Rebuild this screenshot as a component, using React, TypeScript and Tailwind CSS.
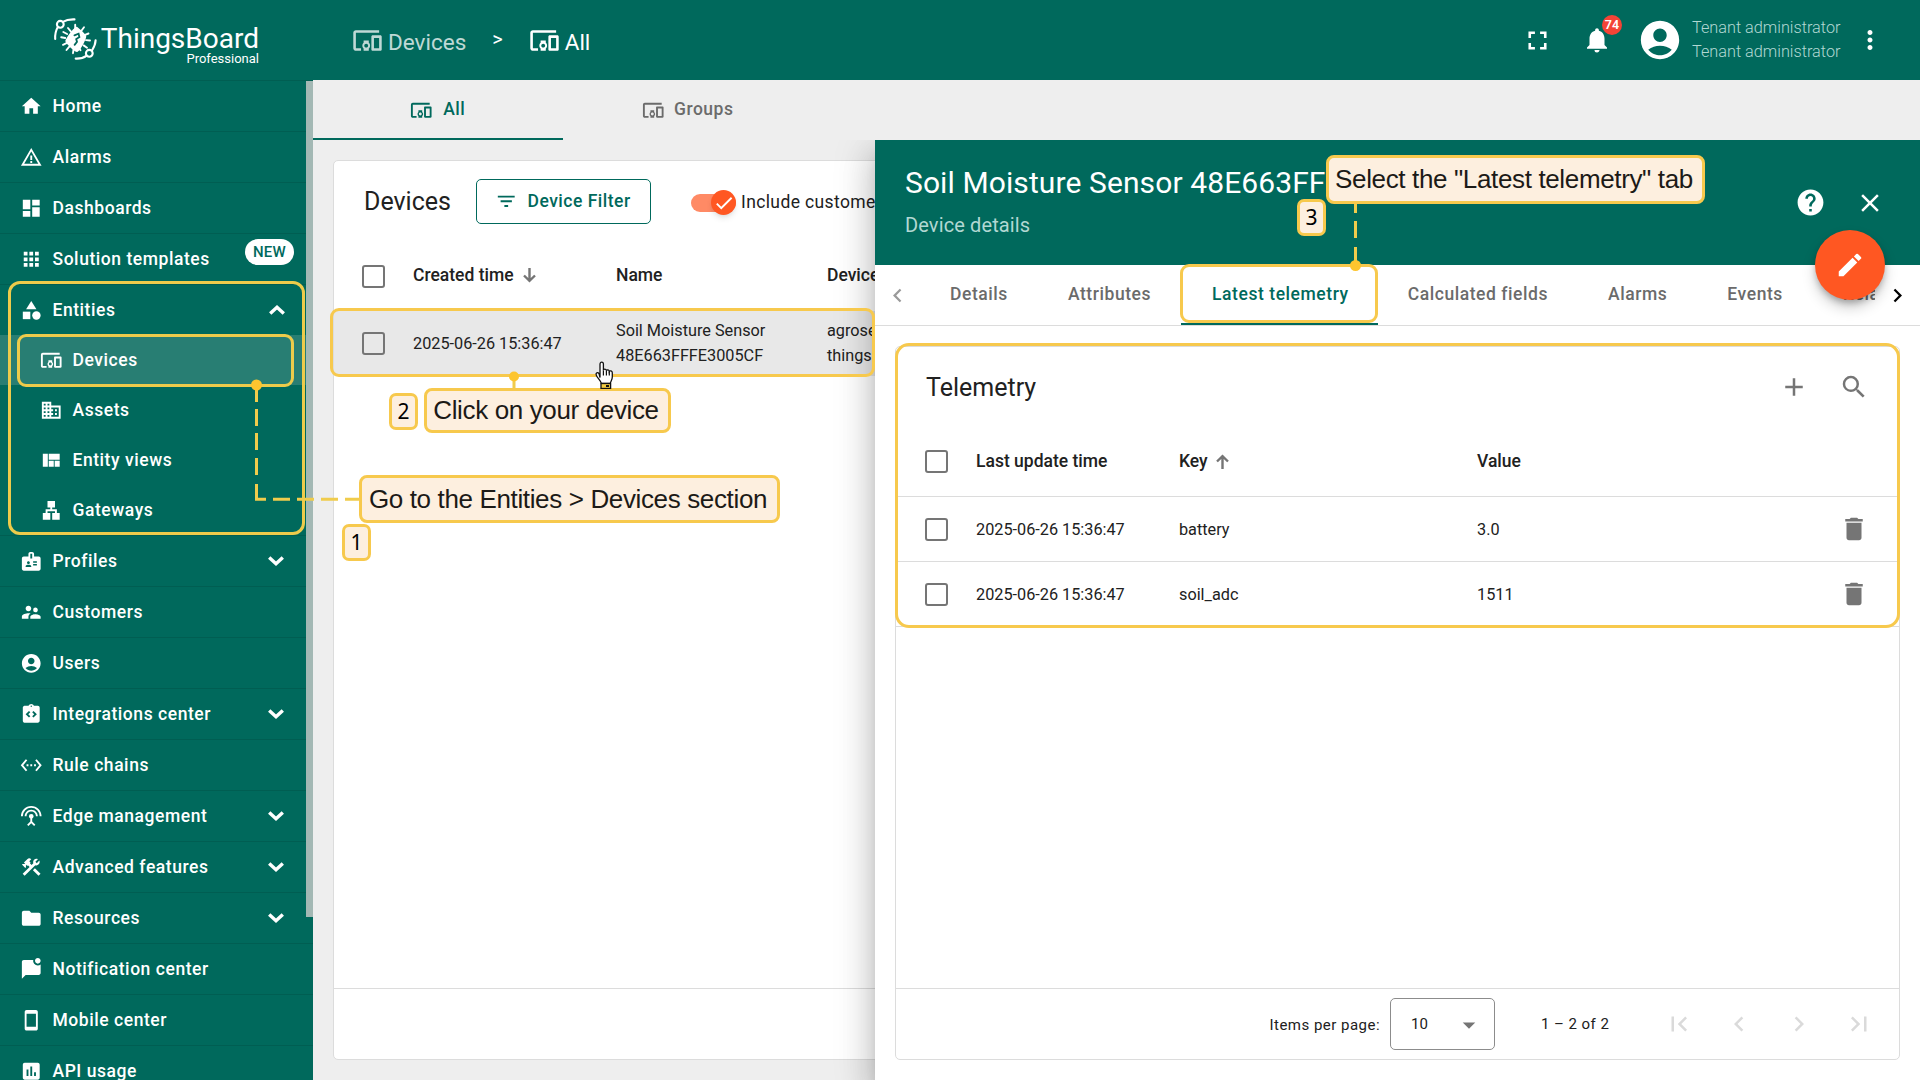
import type { ReactNode } from 'react';
import type { IconType } from 'react-icons';
import {
  MdAccountCircle,
  MdAdd,
  MdApps,
  MdArrowDropDown,
  MdBadge,
  MdCategory,
  MdCheck,
  MdChevronLeft,
  MdChevronRight,
  MdClose,
  MdConstruction,
  MdDashboard,
  MdDelete,
  MdDevicesOther,
  MdDomain,
  MdEdit,
  MdFilterList,
  MdFirstPage,
  MdFolder,
  MdFullscreen,
  MdHelp,
  MdHome,
  MdInsertChart,
  MdIntegrationInstructions,
  MdLan,
  MdLastPage,
  MdMarkChatUnread,
  MdMoreVert,
  MdNotifications,
  MdSearch,
  MdSettingsEthernet,
  MdSettingsInputAntenna,
  MdStayCurrentPortrait,
  MdSupervisorAccount,
  MdViewQuilt,
  MdWarningAmber,
} from 'react-icons/md';

type MenuItem = {
  label: string;
  icon: IconType;
  badge?: string;
  toggle?: 'open' | 'closed';
  children?: { label: string; icon: IconType; active?: boolean }[];
};

const menu: MenuItem[] = [
  { label: 'Home', icon: MdHome },
  { label: 'Alarms', icon: MdWarningAmber },
  { label: 'Dashboards', icon: MdDashboard },
  { label: 'Solution templates', icon: MdApps, badge: 'NEW' },
  {
    label: 'Entities',
    icon: MdCategory,
    toggle: 'open',
    children: [
      { label: 'Devices', icon: MdDevicesOther, active: true },
      { label: 'Assets', icon: MdDomain },
      { label: 'Entity views', icon: MdViewQuilt },
      { label: 'Gateways', icon: MdLan },
    ],
  },
  { label: 'Profiles', icon: MdBadge, toggle: 'closed' },
  { label: 'Customers', icon: MdSupervisorAccount },
  { label: 'Users', icon: MdAccountCircle },
  { label: 'Integrations center', icon: MdIntegrationInstructions, toggle: 'closed' },
  { label: 'Rule chains', icon: MdSettingsEthernet },
  { label: 'Edge management', icon: MdSettingsInputAntenna, toggle: 'closed' },
  { label: 'Advanced features', icon: MdConstruction, toggle: 'closed' },
  { label: 'Resources', icon: MdFolder, toggle: 'closed' },
  { label: 'Notification center', icon: MdMarkChatUnread },
  { label: 'Mobile center', icon: MdStayCurrentPortrait },
  { label: 'API usage', icon: MdInsertChart },
];

const telemetry = [
  { time: '2025-06-26 15:36:47', key: 'battery', value: '3.0' },
  { time: '2025-06-26 15:36:47', key: 'soil_adc', value: '1511' },
];

function Logo() {
  return (
    <svg width="46" height="46" viewBox="0 0 46 46" fill="none" stroke="#fff" strokeWidth="2.100" strokeLinecap="round">
      {/* orbit arcs */}
      <circle cx="9.3" cy="9.3" r="3.4" />
      <path d="M11.8 6.8C14.5 5.2 18.5 4.2 23.5 4.4" />
      <path d="M6.8 12C4.8 15.5 3.9 19.5 4.2 24" />
      <circle cx="38.3" cy="38.3" r="3.4" />
      <path d="M41 35.5C43.2 32 44.5 29 44.6 25.3" />
      <path d="M35.8 40.6C32.5 43 29 43.8 24.7 43.6" />
      {/* chip pins */}
      <path
        d="M17 13l3 3.6M24.2 9.8v4M33 12.2l-3 4M37.5 18.5l-4 1.6M39 25.5l-4-.4M36 32.8l-3.4-2.4M29.5 35.2l-2-3.2M22 38.2l.6-4M15.5 35l2.8-3.4M12 29.8l4-2M10.2 22.2l4 .8M12.3 17l3.8 2"
        strokeWidth="1.900"
      />
      <path d="M25.600 11.800c1 0 9 7.200 9.600 9.200.6 2-5.400 14.600-9 16-1.800.5-11.800-8.600-11.800-10.800 0-2.400 8.800-14.400 11.200-14.400z" fill="#fff" stroke="none" />
      <path d="M23.400 20.300l4.200-1.600.8 3.400-3.200 2 .8 2.800-2.400 3" stroke="#00695c" strokeWidth="1.800" />
    </svg>
  );
}

function Chevron({ open }: { open: boolean }) {
  return (
    <svg width="16" height="10" viewBox="0 0 16 10" fill="none" stroke="#fff" strokeWidth="3.4">
      {open ? <path d="M1.200 8.600L8 2.300l6.800 6.300" /> : <path d="M1.200 1.400L8 7.700l6.800-6.300" />}
    </svg>
  );
}

function SortArrow({ up }: { up?: boolean }) {
  return (
    <svg width="13" height="15" viewBox="0 0 13 15" fill="none" stroke="#757575" strokeWidth="2.400">
      {up ? <path d="M6.500 15V2M1 7.500l5.500-5.300L12 7.500" /> : <path d="M6.500 0v13M1 7.500l5.500 5.300L12 7.500" />}
    </svg>
  );
}

function Checkbox() {
  return <span className="block size-[23px] shrink-0 rounded-[3px] border-[2.500px] border-[#757575]" />;
}

function Sidebar() {
  return (
    <nav className="relative w-[313px] shrink-0 overflow-hidden bg-[#00695c] text-[17.500px] font-medium tracking-[0.55px] text-white">
      {menu.map(({ label, icon: Icon, badge, toggle, children }) => (
        <div key={label}>
          <div className="flex h-[51px] items-center border-t border-[#005e52] pl-5">
            <Icon className="size-[22.500px]" />
            <span className="ml-[10px]">{label}</span>
            {badge && (
              <span className="relative -top-[7px] ml-auto mr-[19px] flex h-[26px] w-[49px] items-center justify-center rounded-full bg-white text-[15px] tracking-[0.2px] text-[#00695c]">
                {badge}
              </span>
            )}
            {toggle && (
              <span className={toggle === 'open' ? 'ml-auto mr-7' : 'ml-auto mr-[29px]'}>
                <Chevron open={toggle === 'open'} />
              </span>
            )}
          </div>
          {children?.map(({ label: childLabel, icon: ChildIcon, active }) => (
            <div key={childLabel} className={active ? 'flex h-[50px] items-center bg-[#287e73] pl-10' : 'flex h-[50px] items-center pl-10'}>
              <ChildIcon className="size-[22.500px]" />
              <span className="ml-[10px]">{childLabel}</span>
            </div>
          ))}
        </div>
      ))}
      {/* scrollbar thumb */}
      <div className="absolute right-0 top-px h-[836px] w-[7px] bg-[#a3b8b4]" />
    </nav>
  );
}

function TopBar() {
  return (
    <header className="flex h-20 shrink-0 bg-[#00695c] text-white">
      <div className="flex w-[313px] pl-[51px] pt-[15px]">
        <Logo />
        <div className="ml-[4px] mt-[10px] flex w-[158px] flex-col items-end">
          <span className="text-[28px] leading-[28px]">ThingsBoard</span>
          <span className="text-[13px] leading-[12px]">Professional</span>
        </div>
      </div>
      <div className="flex items-center pl-[39px] text-[22.500px]">
        <span className="flex items-center text-white/75">
          <MdDevicesOther className="size-[31px]" />
          <span className="ml-[5px] mt-[5px]">Devices</span>
        </span>
        <span className="mx-[26px] -mt-[2px] text-[20px]">&gt;</span>
        <span className="flex items-center">
          <MdDevicesOther className="size-[31px]" />
          <span className="ml-[5px] mt-[5px]">All</span>
        </span>
      </div>
      <div className="ml-auto flex items-center pr-[35px]">
        <MdFullscreen className="size-[31px]" />
        <span className="relative ml-[29px]">
          <MdNotifications className="size-[30px]" />
          <span className="absolute -top-[10px] left-5 flex size-5 items-center justify-center rounded-full bg-[#f44336] text-[12.500px] font-semibold">
            74
          </span>
        </span>
        <MdAccountCircle className="ml-[25px] size-[46px]" />
        <div className="ml-[9px] w-[148px] whitespace-nowrap text-[16.250px] font-light leading-6 text-[#b2d8d3]">
          <p>Tenant administrator</p>
          <p>Tenant administrator</p>
        </div>
        <MdMoreVert className="ml-[15px] size-[30px]" />
      </div>
    </header>
  );
}

function DevicesPage() {
  return (
    <div className="flex h-full flex-col">
      <div className="flex h-[60px] shrink-0 text-[17.500px] font-medium tracking-[0.5px]">
        <div className="flex w-[250px] items-center justify-center border-b-2 border-[#00695c] text-[#00695c]">
          <MdDevicesOther className="-ml-px mt-[2px] size-[22.500px]" />
          <span className="ml-[11px]">All</span>
        </div>
        <div className="flex w-[250px] items-center justify-center border-b-2 border-transparent text-[#6b6b6b]">
          <MdDevicesOther className="-ml-px mt-[2px] size-[22.500px]" />
          <span className="ml-[10px]">Groups</span>
        </div>
      </div>
      <section className="mb-5 ml-5 mr-5 mt-5 flex grow flex-col rounded-[5px] border border-[#dcdcdc] bg-white text-[#212121]">
        <div className="flex h-20 shrink-0 items-center pl-[30px]">
          <h2 className="mt-[2px] w-[87px] text-[25px]">Devices</h2>
          <button className="ml-[25px] flex h-[45px] w-[175px] items-center rounded-[5px] border border-[#00695c] pl-[18px] text-[17.500px] font-medium tracking-[0.5px] text-[#00695c]">
            <MdFilterList className="size-[22.500px]" />
            <span className="ml-[10px]">Device Filter</span>
          </button>
          <span className="ml-10 mt-[3px] flex h-[18px] w-[45px] items-center justify-end rounded-full bg-[#ff8a65]">
            <span className="flex size-[25px] shrink-0 items-center justify-center rounded-full bg-[#ff5722] text-white shadow-md">
              <MdCheck className="size-[22px]" />
            </span>
          </span>
          <span className="ml-[5px] mt-[2px] whitespace-nowrap text-[17.500px] tracking-[0.38px]">Include customer entities</span>
        </div>
        <div className="flex h-[70px] shrink-0 items-center pl-[28px] text-[17.500px] font-medium">
          <Checkbox />
          <span className="-mt-[2px] ml-[28px] flex w-[203px] items-center gap-[9px]">
            Created time <SortArrow />
          </span>
          <span className="-mt-[2px] w-[211px]">Name</span>
          <span className="-mt-[2px] whitespace-nowrap">Device profile</span>
        </div>
        <div className="flex h-[65px] shrink-0 items-center bg-[#e8e8e8] pl-[28px] text-[16.250px] leading-[25px]">
          <Checkbox />
          <span className="ml-[28px] w-[203px]">2025-06-26 15:36:47</span>
          <span className="-mt-[2px] w-[170px]">Soil Moisture Sensor 48E663FFFE3005CF</span>
          <span className="-mt-[2px] ml-[41px] w-[100px]">agrosense thingsboard</span>
        </div>
        <div className="mt-auto h-[71px] shrink-0 border-t border-[#dcdcdc]" />
      </section>
    </div>
  );
}

function Paginator() {
  return (
    <div className="mt-auto flex h-[71px] shrink-0 items-center border-t border-[#dcdcdc] pr-[10px] text-[15px]">
      <span className="ml-auto mt-[2px] tracking-[0.48px]">Items per page:</span>
      <span className="ml-[10px] flex h-[52px] w-[105px] items-center rounded-[5px] border border-[#8c8c8c] pl-5 pt-px">
        10
        <MdArrowDropDown className="ml-auto mr-[10px] size-[30px] text-[#757575]" />
      </span>
      <span className="ml-[46px] w-[108px] tracking-[0.45px]">1 – 2 of 2</span>
      {[MdFirstPage, MdChevronLeft, MdChevronRight, MdLastPage].map((Icon, i) => (
        <span key={i} className="flex w-[60px] justify-center text-[#dadada]">
          <Icon className="size-[30px]" />
        </span>
      ))}
    </div>
  );
}

function DetailsPanel() {
  return (
    <aside className="absolute inset-y-0 right-0 flex w-[1045px] flex-col bg-white text-[#212121] shadow-[0_10px_13px_-6px_rgba(0,0,0,0.200),0_20px_30px_3px_rgba(0,0,0,0.140),0_8px_38px_6px_rgba(0,0,0,0.120)]">
      <header className="flex h-[125px] shrink-0 items-center bg-[#00695c] pl-[30px] pr-[35px] text-white">
        <div className="-mt-[3px] grow">
          <h1 className="text-[30px] leading-[40px] tracking-[0.1px]">Soil Moisture Sensor 48E663FF</h1>
          <p className="mt-[7px] text-[20px] leading-[30px] tracking-[0.12px] text-[#b2d8d3]">Device details</p>
        </div>
        <MdHelp className="size-[31px]" />
        <MdClose className="ml-[29px] mt-px size-[30px]" />
      </header>
      <div className="flex h-[61px] shrink-0 border-b border-[#dcdcdc] text-[17.500px] font-medium tracking-[0.56px] text-[#6b6b6b]">
        <span className="flex w-[45px] items-center justify-center">
          <MdChevronLeft className="size-[27px] text-[#9a9a9a]" />
        </span>
        <div className="flex w-[955px] overflow-hidden whitespace-nowrap leading-[59px]">
          <span className="px-[30px]">Details</span>
          <span className="px-[30px]">Attributes</span>
          <span className="h-[60px] border-b-2 border-[#00695c] pl-[31px] pr-[29px] text-[#00695c]">Latest telemetry</span>
          <span className="px-[30px]">Calculated fields</span>
          <span className="px-[30px]">Alarms</span>
          <span className="px-[30px]">Events</span>
          <span className="px-[30px]">Relations</span>
        </div>
        <span className="flex w-[45px] items-center justify-center">
          <MdChevronRight className="size-[27px] text-black" />
        </span>
      </div>
      <section className="m-5 flex grow flex-col rounded-[5px] border border-[#dcdcdc]">
        <div className="flex h-20 shrink-0 items-center pl-[30px] pr-[30px] text-[#757575]">
          <h2 className="mt-[2px] grow text-[25px] text-[#212121]">Telemetry</h2>
          <MdAdd className="size-[30px]" />
          <MdSearch className="ml-[30px] size-[30px]" />
        </div>
        <div className="flex h-[70px] shrink-0 items-center border-b border-[#dcdcdc] pl-[29px] text-[17.500px] font-medium">
          <Checkbox />
          <span className="ml-[28px] w-[203px]">Last update time</span>
          <span className="flex w-[298px] items-center gap-2">
            Key <SortArrow up />
          </span>
          <span>Value</span>
        </div>
        {telemetry.map((row) => (
          <div key={row.key} className="flex h-[65px] shrink-0 items-center border-b border-[#dcdcdc] pl-[29px] pr-[30px] text-[16.250px]">
            <Checkbox />
            <span className="ml-[28px] mt-[2px] w-[203px]">{row.time}</span>
            <span className="mt-[2px] w-[298px]">{row.key}</span>
            <span className="mt-[2px] grow">{row.value}</span>
            <MdDelete className="size-[30px] text-[#757575]" />
          </div>
        ))}
        <Paginator />
      </section>
    </aside>
  );
}

function Callout({ className, children }: { className: string; children: ReactNode }) {
  return (
    <div
      className={`absolute flex items-center justify-center whitespace-nowrap rounded-[8px] border-[3px] border-[#f7c94d] bg-[#fdefdf] pr-[3px] font-['Liberation_Sans',sans-serif] text-[26px] tracking-[-0.36px] text-[#1c1a17] ${className}`}
    >
      {children}
    </div>
  );
}

function StepNumber({ className, children }: { className: string; children: ReactNode }) {
  return (
    <div
      className={`absolute flex h-[37px] w-[29px] items-center justify-center rounded-[7px] border-[3px] border-[#f7c94d] bg-[#fdefdf] font-['Noto_Sans',sans-serif] text-[21px] text-black ${className}`}
    >
      {children}
    </div>
  );
}

// Tutorial layer: highlight frames, connectors and numbered hints.
function Annotations() {
  return (
    <div className="pointer-events-none absolute inset-0">
      <div className="absolute left-[8px] top-[281px] h-[254px] w-[297px] rounded-[12px] border-[3px] border-[#edcb4b]" />
      <div className="absolute left-[17px] top-[334px] h-[53px] w-[277px] rounded-[9px] border-[3px] border-[#edcb4b]" />
      <div className="absolute left-[330px] top-[308px] h-[69px] w-[545px] rounded-[9px] border-[3px] border-[#f7c94d]" />
      <div className="absolute left-[1180px] top-[264px] h-[59px] w-[198px] rounded-[9px] border-[3px] border-[#f7c94d]" />
      <div className="absolute left-[895px] top-[343px] h-[285px] w-[1005px] rounded-[14px] border-[3px] border-[#f7c94d]" />

      <svg className="absolute inset-0" width="1920" height="1080" fill="none" stroke="#f0cc4c" strokeWidth="3">
        <path d="M256.500 385v17M256.500 409v17M256.500 433v17M256.500 458v17M256.500 484v15.200H266M273 499.200h17M297 499.200h17M321 499.200h17M345 499.200h16" />
        <path d="M514 377v13M1355.500 203v10M1355.500 221v17M1355.500 247v17" />
        <g fill="#fdc52f" stroke="none">
          <circle cx="256.500" cy="385" r="5.500" />
          <circle cx="514" cy="376.500" r="5" />
          <circle cx="1355.500" cy="265.500" r="5.500" />
        </g>
      </svg>

      <Callout className="left-[359px] top-[475px] h-[48px] w-[421px]">Go to the Entities &gt; Devices section</Callout>
      <StepNumber className="left-[342px] top-[524px]">1</StepNumber>
      <Callout className="left-[424px] top-[388px] h-[45px] w-[247px]">Click on your device</Callout>
      <StepNumber className="left-[389px] top-[393px]">2</StepNumber>
      <Callout className="left-[1326px] top-[155px] h-[49px] w-[379px]">Select the "Latest telemetry" tab</Callout>
      <StepNumber className="left-[1297px] top-[199px]">3</StepNumber>

      {/* hand cursor */}
      <svg className="absolute left-[594px] top-[360px]" width="21" height="29" viewBox="0 0 21 29">
        <path
          d="M6 17.500V4.200C6 1.400 9.400 1.400 9.400 4.200V10.500C9.600 8.600 12.300 8.800 12.400 10.800C12.900 9.200 15.200 9.600 15.300 11.500C16 10.300 18.300 10.700 18.300 12.800V17C18.300 20 16.500 21.500 16.200 23.500H7.400C6.800 20.800 3.600 18.300 2.300 15.200C1.300 12.900 3.700 11.800 5 13.700Z"
          fill="#fff"
          stroke="#111"
          strokeWidth="1.300"
        />
        <path d="M9.400 10.500v5M12.400 11v4.500M15.300 11.500v4" stroke="#111" strokeWidth="1.200" />
        <rect x="7" y="23.500" width="9.600" height="5" fill="#f2cc43" stroke="#111" strokeWidth="1.300" />
        <rect x="12" y="25" width="3" height="2" fill="#111" />
      </svg>
    </div>
  );
}

export default function App() {
  return (
    <div className="relative flex h-screen w-screen flex-col overflow-hidden bg-[#eeeeee] font-['Roboto',sans-serif]">
      <TopBar />
      <div className="flex min-h-0 grow">
        <Sidebar />
        <main className="relative min-w-0 grow">
          <DevicesPage />
          <div className="absolute inset-x-0 bottom-0 top-[60px] overflow-hidden">
            <DetailsPanel />
            <button className="absolute right-[35px] top-[90px] flex size-[70px] items-center justify-center rounded-full bg-[#ff5722] text-white shadow-[0_4px_6px_-1px_rgba(0,0,0,0.250),0_8px_14px_rgba(0,0,0,0.180)]">
              <MdEdit className="size-[30px]" />
            </button>
          </div>
        </main>
      </div>
      <Annotations />
    </div>
  );
}
